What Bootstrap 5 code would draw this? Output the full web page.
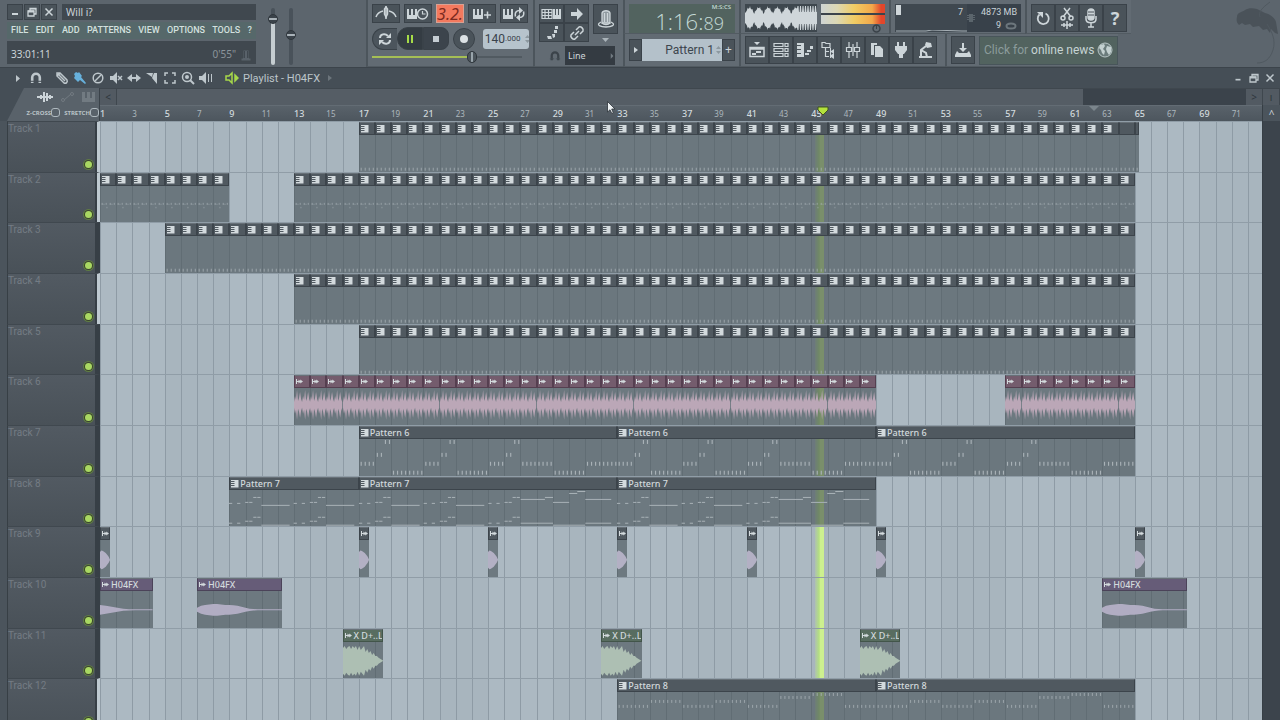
<!DOCTYPE html>
<html lang="en">
<head>
<meta charset="utf-8">
<meta name="viewport" content="width=device-width, initial-scale=1">
<title>Will i? - Playlist</title>
<link href="https://cdn.jsdelivr.net/npm/bootstrap@5.3.0/dist/css/bootstrap.min.css" rel="stylesheet">
<style>
  :root { --ink:#ccd4d9; --dark:#40484f; --edge:#3a4249; --lime:#a6d84a; --eighths:575; }
  body { background:#5c656d; color:var(--ink); font-family:"Noto Sans",sans-serif; font-size:10px; line-height:1; }
  .narrow { font-family:Roboto,"Noto Sans",sans-serif; }
  button, input, select { font:inherit; color:inherit; border:0; padding:0; margin:0; border-radius:0; }
  svg { display:block; }
  .ico { width:18px; height:18px; fill:none; stroke:currentColor; stroke-width:1.5; }
  .ico .f, .f { fill:currentColor; stroke:none; }
  .icon-sm { width:14px; height:14px; }

  /* toolbar */
  .toolbar-top { height:68px; background:#5c656d; border-bottom:1px solid #3c444b; }
  .panel { background:#626b73; border-left:2px solid #4c555c; border-bottom:1px solid #525b62; }
  .tool { background:#4a535a; border:1px solid var(--edge); display:flex; align-items:center; justify-content:center; color:#cdd5d9; }
  .win { width:16px; height:16px; }
  .screen { background:var(--dark); }
  .titles { width:256px; padding-left:7px; gap:2px; }
  .titles .song { height:16px; gap:1px; }
  .menu { background:#56686a; height:17px; font-size:9px; font-weight:500; }
  .menu a { color:#d3e0df; text-decoration:none; }
  .hintbar { height:23px; }
  .faders { width:110px; }
  .w28 { width:28px; height:19px; }
  .w25 { width:25px; height:19px; }
  .w24 { width:24px; height:28px; }
  .hot { background:#f3795e; color:#7c2a20; border-color:#d8a193; font-size:16px; font-style:italic; }
  .loopbtn { width:25px; height:22px; border-radius:11px 0 0 11px; background:#4c555d; }
  .pausebtn { width:26px; height:23px; border-radius:11px 0 0 11px; background:#343c43; }
  .stopbtn { width:26px; height:23px; border-radius:0 8px 8px 0; background:#3c444c; }
  .recbtn { width:22px; height:22px; border-radius:50%; }
  .tempo { width:46px; height:20px; background:#b6c3cc; border-radius:3px; color:#39424a; }
  .tempo input { width:22px; background:transparent; font-size:12px; text-align:right; }
  .linebox { width:50px; height:19px; background:#343b42; appearance:none; padding-left:3px; font-size:9px; }
  .clock { width:106px; height:29px; background:#52635f; color:#c3d9d6; font-family:"Open Sans","Noto Sans",sans-serif; font-size:22px; font-weight:300; padding-right:11px; padding-bottom:1px; }
  .clock small { font-size:18px; }
  .clock .unit { font-size:6px; font-weight:600; right:4px; }
  .patbox { width:81px; height:22px; background:#b4c1ca; color:#3c464e; appearance:none; font-size:12px; text-align:right; padding-right:8px; }
  .patside { width:13px; height:22px; font-size:12px; }
  .meter { width:64px; height:20px; background:#3c444b; }
  .meter i { display:block; height:9px; background:linear-gradient(90deg,#cfd4d3 0,#dcd8b4 25%,#f0cc64 52%,#f3a84a 80%,#e2462b 94%); }
  .cpu { width:126px; height:28px; background:#38414a; font-size:9px; white-space:nowrap; }
  .newsbox { width:139px; height:29px; background:#52635f; border:1px solid #48555a; font-family:Roboto,sans-serif; font-size:12px; color:#8c9c9c; text-decoration:none; }
  .newsbox b { font-weight:400; color:#c6d4d4; }
  .bird { width:44px; height:66px; }

  /* ranges */
  input[type=range] { appearance:none; background:transparent; }
  .seek { width:150px; height:14px; }
  .seek::-webkit-slider-runnable-track { height:2px; background:linear-gradient(90deg,#a5bf55 66%,#515a61 66%); }
  .seek::-webkit-slider-thumb { appearance:none; width:10px; height:12px; margin-top:-5px; border-radius:5px; background:linear-gradient(90deg,#4b545b 40%,#99a5ac 40% 60%,#4b545b 60%); border:1px solid #2f363c; }
  .fader { writing-mode:vertical-lr; direction:rtl; width:10px; height:57px; }
  .fader::-webkit-slider-runnable-track { width:4px; background:#49525a; border-radius:2px; }
  .fader.vol::-webkit-slider-runnable-track { background:linear-gradient(#49525a 20%,#c5cdd1 20%); }
  .fader::-webkit-slider-thumb { appearance:none; width:10px; height:10px; margin-left:-3px; border-radius:50%; background:linear-gradient(#3b434a 40%,#aab3b9 40% 60%,#3b434a 60%); border:1px solid #2f363c; }

  /* playlist window */
  .pl-title { height:20px; background:#454e56; }
  .pl-title button { background:transparent; color:#bec7cc; }
  .pl-name { font-family:Roboto,"Noto Sans",sans-serif; font-size:11px; color:#bcc5ca; }
  .corner { width:100px; background:#454e56; border-left:7px solid #454e56; }
  .corner-in { background:#59626a; height:100%; clip-path:polygon(17px 0,100% 0,100% 100%,0 100%); border-right:1px solid var(--edge); }
  .corner label { font-size:6px; color:#b9c2c7; font-weight:700; }
  .corner input[type=checkbox] { appearance:none; width:9px; height:9px; border:1px solid #aeb8be; border-radius:3px; }
  .scrollrow { height:17px; background:#555d65; border-top:1px solid #3f474e; }
  .scrollrow button { width:17px; background:#525a62; color:#2f373d; border-right:1px solid #3f474e; }
  .thumb { width:163px; background:#3b434b; }
  .eighths { display:grid; grid-template-columns:repeat(var(--eighths),minmax(0,1fr)); }
  .ruler { height:16px; background:linear-gradient(#59626a,#4d565e); border-top:1px solid #636c74; }
  .ruler span { font-size:8px; line-height:16px; color:#adb7bd; white-space:nowrap; }
  .ruler .major { font-size:9px; font-weight:500; color:#d2dade; }
  .rightcol { width:18px; background:#3c444c; border-left:1px solid #363e45; }
  .labels { width:100px; border-left:7px solid #4b545c; }
  .row-h { flex:0 0 8.46%; min-height:0; }
  .tracklabel { background:linear-gradient(#525a62,#495158); border-top:1px solid #40484f; border-left:1px solid #373f45; border-right:3px solid #373f46; color:#747c84; box-shadow:inset -2px 0 #373f46; }
  .tracklabel.lit { border-right-color:#bfcad1; }
  .tname { font-family:Roboto,sans-serif; font-size:10px; line-height:14px; }
  .led { width:7px; height:7px; border-radius:50%; background:#a9d862; box-shadow:0 0 0 1px #3a442f,0 0 0 2px #5f7c43; margin-right:5px; }
  .stage { background:#acb9c2; }
  .barcell { border-left:1px solid #8e9ba5; }
  .barcell.alt { background:#a8b5be; }
  .lane { border-top:1px solid #909da7; grid-template-rows:minmax(0,1fr); }
  .clip { min-width:0; overflow:hidden; grid-row:1; display:flex; flex-direction:column; background:rgba(67,78,84,.6); --tone:#505960; --line:#3c444b; --wave:#b3b0c4; }
  .clip header { flex:0 0 13px; gap:1px; background:var(--tone); border:1px solid var(--line); border-top-color:#687178; overflow:hidden; white-space:nowrap; color:#d3dadd; }
  .clip header svg { flex:none; width:9px; height:9px; }
  .clip header span { font-size:9px; line-height:11px; font-weight:500; }
  .clip .body { flex:1 1 0; min-height:0; width:100%; fill:var(--wave); }
  .clip.notes .body { fill:#a9b2b7; }
  .clip.pink { --tone:#745c6d; --line:#553f50; --wave:#bba7b7; }
  .clip.violet { --tone:#665c78; --line:#4b4359; --wave:#b1adc3; }
  .clip.green { --tone:#586d60; --line:#42554a; --wave:#adbfb3; }
  .playhead { left:61.5%; width:9px; background:linear-gradient(90deg,rgba(190,230,140,.25),#b4e080 45%,#cdf08f 60%,#cdf08f); }
  .marker { left:61.7%; top:0; width:12px; height:10px; z-index:3; }
  .songend { left:85.1%; top:0; width:10px; height:5px; }
  .pointer { left:607px; top:101px; width:9px; height:13px; z-index:5; }
</style>
</head>
<body class="vh-100 d-flex flex-column overflow-hidden">

<svg class="d-none">
  <symbol id="i-notes" viewBox="0 0 9 9"><path class="f" d="M1 1h7.500v7.500H1V7h3.500V6H1V5h3.500V4H1V3h3.500V2H1z"/></symbol>
  <symbol id="i-wave" viewBox="0 0 9 9"><path class="f" d="M1 2h1v2h1.500V2.500L5.200 4V2.500L8 4.500 5.200 6.500V5L3.500 6.500V5H2v2H1z"/></symbol>
  <symbol id="i-magnet" viewBox="0 0 14 14"><path d="M3.200 12V6.500a3.800 3.800 0 0 1 7.600 0V12" fill="none" stroke="currentColor" stroke-width="2.600"/><path d="M1 10.300h5M8 10.300h5" stroke="#454e56" stroke-width="1"/></symbol>
  <symbol id="i-restore" viewBox="0 0 12 12"><path d="M2 5h6v5H2zM4 5V2.500h6V8H8" fill="none" stroke="currentColor" stroke-width="1.300"/><path class="f" d="M2 4.500h6v2H2zM4 2h6v1.500H4z"/></symbol>
  <symbol id="i-close" viewBox="0 0 12 12"><path d="M2.500 2.500l7 7M9.500 2.500l-7 7" stroke="currentColor" stroke-width="1.500"/></symbol>
  <symbol id="i-min" viewBox="0 0 12 12"><path class="f" d="M3 7h6v2H3z"/></symbol>
</svg>

<header class="toolbar-top d-flex flex-shrink-0 align-items-start">
  <div class="titles pt-1 flex-shrink-0 d-flex flex-column">
    <div class="d-flex song">
      <button class="tool win" aria-label="Minimize"><svg width="12" height="12"><use href="#i-min"/></svg></button>
      <button class="tool win" aria-label="Restore"><svg width="12" height="12"><use href="#i-restore"/></svg></button>
      <button class="tool win" aria-label="Close"><svg width="12" height="12"><use href="#i-close"/></svg></button>
      <div class="screen flex-fill d-flex align-items-center ps-1 ms-1">Will i?</div>
    </div>
    <nav class="menu narrow d-flex justify-content-between align-items-center px-1" aria-label="Main">
      <a href="#">FILE</a><a href="#">EDIT</a><a href="#">ADD</a><a href="#">PATTERNS</a><a href="#">VIEW</a><a href="#">OPTIONS</a><a href="#">TOOLS</a><a href="#">?</a>
    </nav>
    <div class="screen hintbar d-flex justify-content-between ps-1 pe-1 pt-2">
      <span>33:01:11</span>
      <span class="d-flex gap-1" style="color:#8b949a">0'55"
        <svg width="12" height="13" viewBox="0 0 12 13"><path fill="#59626a" d="M3 1h6v8h2v3H1V9h2zM4.500 2v7M7.500 2v7" stroke="#40484f"/></svg></span>
    </div>
  </div>

  <div class="faders d-flex gap-2 ps-2 pt-2 flex-shrink-0">
    <input class="fader vol ms-1" type="range" value="88" aria-label="Main volume">
    <input class="fader" type="range" value="53" aria-label="Main pitch">
  </div>

  <section class="panel px-1 pt-1 h-100 flex-shrink-0" aria-label="Transport">
    <div class="d-flex gap-1">
      <button class="tool w28" aria-label="Metronome"><svg class="ico" style="width:22px" viewBox="0 0 22 18"><path d="M11 1v13M1 12c1-3 3-5 7-6M21 12c-1-3-3-5-7-6"/><path d="M9.500 4L11 2l1.500 2v5L11 12 9.500 9z"/></svg></button>
      <button class="tool w28" aria-label="Wait for input"><svg class="ico" style="width:22px" viewBox="0 0 22 18"><path class="f" d="M0 4h2v6h2V4h2v6h2V4h2v10H0z"/><circle cx="15.500" cy="9" r="5"/><path d="M15.500 6v3h3" stroke-width="1.200"/></svg></button>
      <button class="tool w28 hot" aria-label="Countdown">3.2.</button>
      <button class="tool w28" aria-label="Overdub"><svg class="ico" viewBox="0 0 18 18"><path class="f" d="M0 4h2v6h2V4h2v6h2V4h2v10H0z"/><path d="M11 10h7M14.500 6.500v7"/></svg></button>
      <button class="tool w28" aria-label="Loop record"><svg class="ico" style="width:22px" viewBox="0 0 22 18"><path class="f" d="M0 4h2v6h2V4h2v6h2V4h2v10H0z"/><path d="M12.500 11.500c-1-4 1-6 4-6M20.500 6.500c1 4-1 6-4 6"/><path class="f" d="M16 2l4 3.500L16 9zM17 9l-4 3.500 4 3.500z"/></svg></button>
    </div>
    <div class="d-flex align-items-center mt-1">
      <button class="tool loopbtn border-end-0" aria-label="Song or pattern mode"><svg class="ico" viewBox="0 0 18 18"><path d="M4 8c0-4 5-5 8-2M14 10c0 4-5 5-8 2" stroke-width="2"/><path class="f" d="M10 8h5V3zM8 10H3v5z"/></svg></button>
      <button class="tool pausebtn" aria-label="Pause"><svg width="8" height="8"><path fill="#a6dc48" d="M1 0h2v8H1zM5 0h2v8H5z"/></svg></button>
      <button class="tool stopbtn" aria-label="Stop"><svg width="6" height="6"><rect width="6" height="6" fill="#c5cdd3"/></svg></button>
      <button class="tool recbtn mx-1" aria-label="Record"><svg width="8" height="8"><circle cx="4" cy="4" r="4" fill="#dce2e5"/></svg></button>
      <label class="tempo narrow d-flex align-items-center ms-1"><input value="140" aria-label="Tempo"><span style="font-size:8px">.000</span><svg class="ms-1" width="5" height="8"><path fill="#8c989f" d="M0 3l2.500-3L5 3zM0 5h5L2.500 8z"/></svg></label>
    </div>
    <div class="d-flex"><input class="seek" type="range" value="68" aria-label="Song position"></div>
  </section>

  <section class="panel ps-1 pt-1 h-100 flex-shrink-0" aria-label="Shortcuts" style="width:90px">
    <div class="d-flex gap-1">
      <div class="d-flex flex-wrap" style="width:50px">
        <button class="tool w25" aria-label="Typing keyboard"><svg class="ico" style="width:21px" viewBox="0 0 21 18"><path d="M1 4.500h10v9H1zM1 7.500h10M1 10.500h10M4 4v10M7.500 4v10" stroke-width="1.200"/><path class="f" d="M12 4h2v6h1V4h2v6h1V4h2v10h-8z"/></svg></button>
        <button class="tool w25" aria-label="Step edit"><svg class="ico" viewBox="0 0 18 18"><path class="f" d="M3 7h6V3l6 6-6 6v-4H3z"/></svg></button>
        <button class="tool w25" aria-label="Slide"><svg class="ico" viewBox="0 0 18 18"><path class="f" d="M4 12h4l1 3H5zM9 10h3v3l-2 1zM11 6h3v3h-3zM12 2h3v3h-3z"/></svg></button>
        <button class="tool w25" aria-label="Link"><svg class="ico" viewBox="0 0 18 18"><path d="M7 11l4-4M8 6l3-3c2-1 5 2 4 4l-3 3M10 12l-3 3c-2 1-5-2-4-4l3-3"/></svg></button>
      </div>
      <div class="d-flex flex-column align-items-center">
        <button class="tool" style="width:25px;height:30px" aria-label="Hints"><svg width="20" height="22" viewBox="0 0 20 22" fill="none" stroke="#cdd5d9" stroke-width="1.300"><path fill="#8f999f" d="M6 15V5c1-3 7-3 8 0v10z"/><path d="M8.500 5v9M11.500 5v9M5 14c-6 3 0 5 5 5s11-2 5-5M6 15c2 2 6 2 8 0"/></svg></button>
        <svg class="mt-1" width="7" height="4"><path fill="#aab3b9" d="M0 0h7L3.500 4z"/></svg>
      </div>
    </div>
    <div class="d-flex align-items-center justify-content-end gap-1 pe-2 mt-1">
      <svg width="12" height="12" style="color:#3b434a" viewBox="0 0 14 14"><use href="#i-magnet"/></svg>
      <div class="position-relative">
        <select class="linebox d-block" aria-label="Snap"><option>Line</option></select>
        <svg class="position-absolute top-50 end-0 translate-middle" width="3" height="6"><path fill="#727b82" d="M0 0l3 3-3 3z"/></svg>
      </div>
    </div>
  </section>

  <div class="d-flex flex-column flex-shrink-0">
    <div class="d-flex" style="height:34px">
      <section class="panel px-1 pt-1" aria-label="Time">
        <div class="clock position-relative d-flex align-items-end justify-content-end">1:16:<small>89</small><span class="unit position-absolute top-0">M:S:CS</span></div>
      </section>
      <section class="panel ps-1 pt-1 d-flex gap-1" style="width:150px" aria-label="Output">
        <svg id="scope" width="72" height="28" viewBox="0 0 72 28" style="background:#3e474e"></svg>
        <div><div class="meter d-flex flex-column justify-content-between"><i></i><i></i></div>
          <svg class="ms-auto me-1" width="9" height="9" viewBox="0 0 9 9"><circle cx="4.500" cy="4.500" r="3.500" fill="none" stroke="#3a4249" stroke-width="1.500"/><path d="M4.500 1v4" stroke="#3a4249"/></svg></div>
      </section>
      <section class="panel px-1 pt-1" aria-label="System load">
        <div class="cpu narrow d-flex">
          <div class="d-flex flex-column justify-content-between" style="width:72px;background:#3f4850">
            <div class="d-flex justify-content-between pe-1"><svg width="6" height="11"><rect x="1" y="1" width="5" height="10" fill="#cfd6da"/></svg><span class="pt-1">7</span></div>
            <svg width="72" height="2"><path d="M1 1h30l6-1 30 1h5" stroke="#a7b0b6" fill="none"/></svg></div>
          <svg class="align-self-center" width="8" height="8" viewBox="0 0 8 8"><path fill="#5b656c" d="M2 0h4v8H2zM0 1h8v1H0zM0 3h8v1H0zM0 5h8v1H0z"/></svg>
          <div class="flex-fill text-end pe-1 pt-1">4873 MB<div class="d-flex justify-content-end gap-1 pt-1">9 <svg width="12" height="9"><ellipse cx="6" cy="5" rx="4.500" ry="2.500" fill="none" stroke="#6c767d" stroke-width="2"/></svg></div></div>
        </div>
      </section>
      <section class="panel px-1 pt-1 d-flex" aria-label="History">
        <button class="tool w24" aria-label="Undo"><svg class="ico" viewBox="0 0 18 18"><path d="M5.500 5.500a5.500 5.500 0 1 0 6-1" stroke-width="1.800"/><path class="f" d="M3 3h6v6z"/></svg></button>
        <button class="tool w24" aria-label="Cut"><svg width="18" height="24" viewBox="0 0 18 24" fill="none" stroke="#cdd5d9" stroke-width="1.500"><path d="M5 11l7-9M13 11L6 2"/><circle cx="5" cy="12" r="2"/><circle cx="13" cy="12" r="2"/><path d="M3 19h12M6 17v4M9 15v8M12 17v4"/></svg></button>
        <button class="tool w24" aria-label="Record audio"><svg width="18" height="22" viewBox="0 0 18 22" fill="none" stroke="#cdd5d9" stroke-width="1.500"><rect x="6" y="2" width="6" height="11" rx="3" fill="#cdd5d9"/><path d="M4 9v3c0 5 10 5 10 0V9M9 16v4M6 20h6"/><path d="M6 5h6M6 8h6" stroke="#4a535a" stroke-width="1"/></svg></button>
        <button class="tool w24 fw-bold" style="font-size:18px" aria-label="Help">?</button>
      </section>
    </div>
    <div class="d-flex" style="height:33px">
      <section class="panel px-1 d-flex align-items-center" style="width:116px" aria-label="Pattern">
        <button class="tool patside" aria-label="Pattern menu"><svg width="4" height="6"><path class="f" d="M0 0l4 3-4 3z"/></svg></button>
        <div class="position-relative flex-fill">
          <select class="patbox narrow d-block w-100" aria-label="Pattern"><option>Pattern 1</option></select>
          <svg class="position-absolute top-50 end-0 translate-middle-y" width="6" height="8"><path fill="#8c989f" d="M0 3l2.500-3L5 3zM0 5h5L2.500 8z"/></svg>
        </div>
        <button class="tool patside" aria-label="Add pattern">+</button>
      </section>
      <section class="panel px-1 d-flex align-items-center" style="width:206px" aria-label="Windows">
        <button class="tool w24" aria-label="Playlist"><svg class="ico" viewBox="0 0 18 18"><path d="M2 6.500h14v9H2zM2 8h14"/><path class="f" d="M6 1h6L9 4zM4 12h4v2H4zM8 10h5v2H8z"/></svg></button>
        <button class="tool w24" aria-label="Channel rack"><svg class="ico" viewBox="0 0 18 18"><path d="M2 2.500h9v3H2zM2 7.500h9v3H2zM2 12.500h9v3H2zM13 2.500h3v3h-3zM13 7.500h3v3h-3zM13 12.500h3v3h-3z" stroke-width="1.200"/></svg></button>
        <button class="tool w24" aria-label="Piano roll"><svg class="ico" viewBox="0 0 18 18"><path class="f" d="M1 2h7v14H1v-3h4v-1H1V9h4V8H1V5h4V4H1zM9 12h4v2H9zM11 9h4v2h-4zM14 5h3v3h-3z"/></svg></button>
        <button class="tool w24" aria-label="Browser"><svg class="ico" viewBox="0 0 18 18"><path d="M2 1.500h3l1 1h4v4H2zM5.500 7v8.500H9M5.500 10.500H9" stroke-width="1.200"/><path class="f" d="M10 7h1v3l3-2v5l-3-2v2h-1zM10 13h1v1l3-2v6l-3-2v1h-1z"/></svg></button>
        <button class="tool w24" aria-label="Mixer"><svg class="ico" viewBox="0 0 18 18"><path d="M5 1v5M5 11v6M13 1v5M13 11v6M2.500 6.500h5v4h-5zM10.500 6.500h5v4h-5zM9 3v12" stroke-width="1.200"/></svg></button>
        <button class="tool w24" aria-label="Project files"><svg class="ico" viewBox="0 0 18 18"><path class="f" d="M3 2h6v2H6v10H3zM7 5h5l3 3v8H7z"/></svg></button>
        <button class="tool w24" aria-label="Plugins"><svg class="ico" viewBox="0 0 18 18"><path class="f" d="M5 1h2v4h4V1h2v4h2v4l-3 4h-1v4H7v-4H6L3 9V5h2z"/></svg></button>
        <button class="tool w24" aria-label="Tools"><svg class="ico" viewBox="0 0 18 18"><path d="M5 15V9l5-4M5 9l5 3 1 4M3 16h13" stroke-width="2"/><path class="f" d="M10 1l5 1 1 4-5 1-2-3z"/></svg></button>
      </section>
      <section class="panel ps-1 d-flex align-items-center gap-1" aria-label="News">
        <button class="tool w24" aria-label="Download"><svg class="ico" viewBox="0 0 18 18"><path class="f" d="M8 2h2v5h3L9 11 5 7h3zM3 10l2 2h8l2-2 2 4v2H1v-2z"/></svg></button>
        <a href="#" class="newsbox d-flex align-items-center justify-content-between px-1"><span>Click for <b>online news</b></span><svg width="16" height="16" viewBox="0 0 16 16"><circle cx="8" cy="8" r="7" fill="#6b7c7c" stroke="#b8c6c6"/><path fill="#c3d0d0" d="M3 3l4-1 1 2-2 3 2 2-1 4-2-2-1-3-2-2zM10 4l4 1v5l-2 3-2-3-1-3z"/></svg></a>
      </section>
    </div>
  </div>
  <svg class="bird ms-auto flex-shrink-0" viewBox="0 0 44 66"><path fill="#4a5259" d="M1 17c0-5 6-5 8-7 3-2 8-2 12-1l8 4c5 1 10 5 11 9l2 12-3-1-4-4-1 4-3-4-4 1-4-4-6 1-3-3-5 1-3-2-3 2c-2-2-3-4-2-8z"/><path d="M34 2c-8 6-12 10-10 15M31 24c5 8 9 16 6 26-3 9-8 13-16 13" fill="none" stroke="#505960"/></svg>
</header>

<div class="pl-title d-flex align-items-center flex-shrink-0 ps-3 pe-1">
  <svg width="5" height="7"><path fill="#bcc5ca" d="M0 0l4 3.500L0 7z"/></svg>
  <div class="d-flex align-items-center ms-2 gap-1">
    <button aria-label="Snap" class="me-2"><svg class="icon-sm"><use href="#i-magnet"/></svg></button>
    <button aria-label="Draw"><svg class="ico icon-sm" viewBox="0 0 14 14"><path d="M2 2l3 0 7 7c1 2-1 4-3 3L2 5zM5 2l-3 3M4 4l6 6"/></svg></button>
    <button aria-label="Paint" style="color:#67b1dc"><svg class="ico icon-sm" viewBox="0 0 14 14"><path class="f" d="M1 3l2-2 2 1 1-1 3 4-1 1 5 6-1 1-5-4-2 2-4-4 1-2z"/></svg></button>
    <button aria-label="Delete"><svg class="ico icon-sm" viewBox="0 0 14 14"><circle cx="7" cy="7" r="4.800"/><path d="M4 10l6-6"/></svg></button>
    <button aria-label="Mute"><svg class="ico icon-sm" viewBox="0 0 14 14"><path class="f" d="M1 5h3l4-4v12L4 9H1z"/><path d="M9 5l4 4M13 5l-4 4"/></svg></button>
    <button aria-label="Slip"><svg class="ico icon-sm" viewBox="0 0 14 14"><path class="f" d="M0 7l5-4v3h4V3l5 4-5 4V8H5v3z"/></svg></button>
    <button aria-label="Slice"><svg class="ico icon-sm" viewBox="0 0 14 14"><path class="f" d="M1 2h7l-1 4zM9 2h3v11L7 7z"/></svg></button>
    <button aria-label="Select"><svg class="ico icon-sm" viewBox="0 0 14 14"><path d="M2 5V2h3M9 2h3v3M12 9v3H9M5 12H2V9"/></svg></button>
    <button aria-label="Zoom"><svg class="ico icon-sm" viewBox="0 0 14 14"><circle cx="6" cy="6" r="4.500"/><path d="M9 9l4 4" stroke-width="2"/><circle class="f" cx="6" cy="6" r="2"/></svg></button>
    <button aria-label="Playback"><svg class="ico icon-sm" viewBox="0 0 14 14"><path class="f" d="M0 5h3l4-4v12L3 9H0zM9 3h1v8H9zM12 3h1v8h-1z"/></svg></button>
    <svg class="ms-2 icon-sm" viewBox="0 0 14 14" fill="none" stroke="#a6d84a" stroke-width="1.500"><path d="M1 5h3l3-3v10L4 9H1z"/><path fill="#a6d84a" d="M10 4l3 3-3 3z"/></svg>
    <span class="pl-name">Playlist - H04FX</span>
    <svg class="ms-1" width="4" height="6"><path fill="#6c757c" d="M0 0l4 3-4 3z"/></svg>
  </div>
  <div class="ms-auto d-flex gap-1">
    <button aria-label="Minimize playlist"><svg width="12" height="10" viewBox="0 0 12 12"><use href="#i-min"/></svg></button>
    <button aria-label="Restore playlist"><svg width="12" height="12"><use href="#i-restore"/></svg></button>
    <button aria-label="Close playlist"><svg width="12" height="12"><use href="#i-close"/></svg></button>
  </div>
</div>

<div class="d-flex flex-shrink-0">
  <div class="corner flex-shrink-0"><div class="corner-in d-flex flex-column justify-content-between pb-1">
    <div class="d-flex justify-content-end gap-2 pe-1 pt-1" style="color:#727b82">
      <svg width="16" height="10" viewBox="0 0 16 10" stroke="#ccd4d9" stroke-width="2"><path d="M0 5h16M4 3v4M7 0v10M10 1v8M13 3v4"/></svg>
      <svg width="13" height="10" viewBox="0 0 13 10" fill="none" stroke="currentColor"><path d="M3 8l7-6"/><circle cx="2" cy="8" r="1.500"/><circle cx="11" cy="2" r="1.500"/></svg>
      <svg width="13" height="10" viewBox="0 0 13 10"><path class="f" d="M0 0h3v6h2V0h3v6h2V0h3v10H0z"/></svg>
    </div>
    <div class="d-flex justify-content-end gap-1">
      <label class="d-flex align-items-center">Z-CROSS<input type="checkbox"></label>
      <label class="d-flex align-items-center">STRETCH<input type="checkbox"></label>
    </div>
  </div></div>
  <div class="flex-fill">
    <div class="scrollrow d-flex justify-content-end">
      <button class="me-auto" aria-label="Scroll left">&lt;</button>
      <div class="thumb"></div>
      <button aria-label="Scroll right">&gt;</button><button aria-label="Scroll end">ı</button>
    </div>
    <div class="d-flex">
      <div id="ruler" class="ruler eighths flex-fill position-relative"></div>
      <div class="rightcol text-center pt-1" style="background:#4b545c">^</div>
    </div>
  </div>
</div>

<main class="d-flex flex-fill overflow-hidden" style="min-height:0">
  <div id="labels" class="labels d-flex flex-column flex-shrink-0"></div>
  <div class="stage flex-fill position-relative overflow-hidden">
    <div id="grid" class="eighths position-absolute top-0 start-0 w-100 h-100"></div>
    <div class="playhead position-absolute top-0 h-100"></div>
    <div id="lanes" class="position-relative d-flex flex-column h-100"></div>
  </div>
  <div class="rightcol flex-shrink-0"></div>
</main>
<svg class="pointer position-absolute" viewBox="0 0 9 13"><path fill="#eef2f4" stroke="#2c3238" stroke-width=".8" d="M.5.500v10.500L3 8.800 4.800 12.500l1.500-.8L4.700 8H8z"/></svg>

<script>
const BAR = 16;
const rect = (x, y, w, h) => `<rect x="${x * BAR}" y="${y}" width="${w * BAR}" height="${h}"/>`;
const ticks = (from, bars, y, h = 4) => Array.from({length: bars * 4}, (_, i) => rect(from + i / 4 + .1, y, .07, h)).join('');

/* Note previews, measured in bars across and in 37 units down */
const noteArt = {
  bottom: () => `<g opacity=".7">${ticks(0, 1, 33, 3)}</g>`,
  dotted: () => `<g opacity=".6">${ticks(0, 1, 17, 2)}${rect(.4, 21, .06, 1.5)}${rect(.1, 18, .2, .6)}${rect(.6, 18, .2, .6)}</g>`,
  arp() {
    let s = '';
    for (const b of [0, 4, 8]) {
      s += ticks(b, 1, 23) + rect(b + 1.1, 14, .07, 4) + rect(b + 1.35, 14, .07, 4) + rect(b + 1.6, 1, .07, 4) + rect(b + 1.85, 1, .07, 4);
      s += ticks(b + 2, 2, b === 8 ? 23 : 32);
    }
    return s + ticks(12, 2, 32) + ticks(14, 2, 23);
  },
  melody(len) {
    let s = '';
    const motif = b => [[0, 13], [.5, 13], [1, 12], [1.25, 12], [1.5, 7], [1.75, 7], [0, 33], [.5, 33], [1, 31], [1.25, 31], [1.5, 27], [1.75, 27]]
      .map(([x, y]) => rect(b + x, y, .2, 1)).join('');
    const starts = len > 8 ? [0, 4, 8] : [0, 4];
    for (const b of starts) {
      s += motif(b);
      if (b < 8) s += rect(b + 2, 15, 1.75, 1) + rect(b + 2, 35, 1.75, 1);
    }
    if (len > 8) for (const [x, y, w] of [[10, 9, 1.5], [11.5, 7, .5], [12, 12, 1], [13, 3, .5], [13.5, 1, .5], [14, 9, 1.6], [10, 33, 2], [12, 35, 2], [14, 33, 1.6]]) s += rect(x, y, w, 1);
    return s;
  },
  steps: () => `<g opacity=".7">${[13, 8, 13, 8, 13, 4, 1, 13].map((y, i) => ticks(i * 2, 2, y, 3)).join('')}</g>`
};

/* Mirrored outline of a sound, one amplitude per equal step */
const outline = (amps, width, mid = 17) => {
  const step = width / (amps.length - 1);
  const top = amps.map((a, i) => `${(i * step).toFixed(1)},${mid - a}`);
  const low = amps.map((a, i) => `${(i * step).toFixed(1)},${mid + a}`).reverse();
  return `<polygon points="${top.concat(low).join(' ')}"/>`;
};
const soundArt = {
  drums: w => outline([3, 9, 5, 15, 4, 7, 13, 6, 3, 9, 5, 15, 4, 7, 13, 6, 3], w, 17),
  hit: w => outline([8, 9.500, 9, 8, 7, 5, 3, 0], w, 20),
  tail: w => outline([5, 4, 3, 2, 1, .6, .5, .5, .5, .5], w, 19),
  sweep: w => outline([2, 4, 5, 5.500, 6, 6, 5.500, 5, 5, 4.500, 4, 3, 2, 1.200, .8, .5, .5, .5, .5, .5, .5, .5], w, 19),
  burst: w => outline([13, 15, 12, 14, 15, 12, 15, 13, 15, 11, 15, 11, 13, 15, 9, 12, 8, 10, 6, 8, 5, 5, 3, 2, 1, 0], w, 19)
};

const run = (from, to, clip) => Array.from({length: to - from}, (_, i) => ({at: from + i, len: 1, ...clip}));
const at = (starts, clip) => starts.map(s => ({at: s, ...clip}));
const tracks = [
  [...run(17, 65, {art: 'bottom'}), {at: 65, len: .25, art: 'bottom', bare: true}],
  [...run(1, 9, {art: 'dotted'}), ...run(13, 65, {art: 'dotted'})],
  run(5, 65, {art: 'bottom'}),
  run(13, 65, {art: 'bottom'}),
  run(17, 65, {art: 'bottom'}),
  [...run(13, 49, {art: 'drums', tone: 'pink'}), ...run(57, 65, {art: 'drums', tone: 'pink'})],
  at([17, 33, 49], {len: 16, art: 'arp', name: 'Pattern 6'}),
  [{at: 9, len: 8, art: 'melody', name: 'Pattern 7'}, ...at([17, 33], {len: 16, art: 'melody', name: 'Pattern 7'})],
  at([1, 17, 25, 33, 41, 49, 65], {len: .625, art: 'hit'}),
  [{at: 1, len: 3.25, art: 'tail', name: 'H04FX', tone: 'violet'}, ...at([7, 63], {len: 5.25, art: 'sweep', name: 'H04FX', tone: 'violet'})],
  at([16, 32, 48], {len: 2.5, art: 'burst', name: 'X D+..L', tone: 'green'}),
  at([33, 49], {len: 16, art: 'steps', name: 'Pattern 8'})
];
tracks[0][47].bare = true;
const litTracks = [1, 2, 4, 12];

const clipHtml = c => {
  const notes = c.art in noteArt;
  const w = c.len * BAR;
  const art = notes ? noteArt[c.art](c.len) : soundArt[c.art](w);
  const icon = c.bare ? '' : `<svg><use href="#${notes ? 'i-notes' : 'i-wave'}"/></svg>`;
  const name = c.name ? `<span>${c.name}</span>` : '';
  return `<div class="clip ${notes ? 'notes' : ''} ${c.tone || ''}" style="grid-column:${(c.at - 1) * 8 + 1} / span ${c.len * 8}">
    <header class="d-flex align-items-center">${icon}${name}</header>
    <svg class="body" viewBox="0 0 ${w} 37" preserveAspectRatio="none">${art}</svg></div>`;
};

document.getElementById('lanes').innerHTML = tracks.map(t => `<div class="lane row-h eighths">${t.map(clipHtml).join('')}</div>`).join('');
document.getElementById('labels').innerHTML = tracks.map((_, i) =>
  `<div class="tracklabel row-h d-flex flex-column justify-content-between ${litTracks.includes(i + 1) ? 'lit' : ''}">
    <span class="tname">Track ${i + 1}</span><span class="led align-self-end mb-1"></span></div>`).join('');
document.getElementById('grid').innerHTML = Array.from({length: 72}, (_, i) =>
  `<div class="barcell ${(i >> 2) % 2 ? 'alt' : ''}" style="grid-column:span ${i === 71 ? 7 : 8}"></div>`).join('');
document.getElementById('ruler').innerHTML = Array.from({length: 36}, (_, i) =>
  `<span class="${i % 2 ? '' : 'major'}" style="grid-column:span ${i === 35 ? 15 : 16}">${i * 2 + 1}</span>`).join('') +
  `<svg class="marker position-absolute" viewBox="0 0 12 10"><path fill="#b4e23c" stroke="#3f5420" d="M1 1h10v3L6 9 1 4z"/></svg>
   <svg class="songend position-absolute" viewBox="0 0 10 5"><path fill="#7b858c" d="M0 0h10L5 5z"/></svg>`;
const scope = Array.from({length: 145}, (_, i) => i > 104 ? (i % 5 < 3 ? 12 : 6) : 4 + Math.abs(Math.sin(i * .17)) * 6 + (i % 5 === 0 ? 2 : 0));
document.getElementById('scope').innerHTML = `<g fill="#cfd6da">${outline(scope, 72, 14)}</g>`;
</script>
<script src="https://cdn.jsdelivr.net/npm/bootstrap@5.3.0/dist/js/bootstrap.bundle.min.js"></script>
</body>
</html>
